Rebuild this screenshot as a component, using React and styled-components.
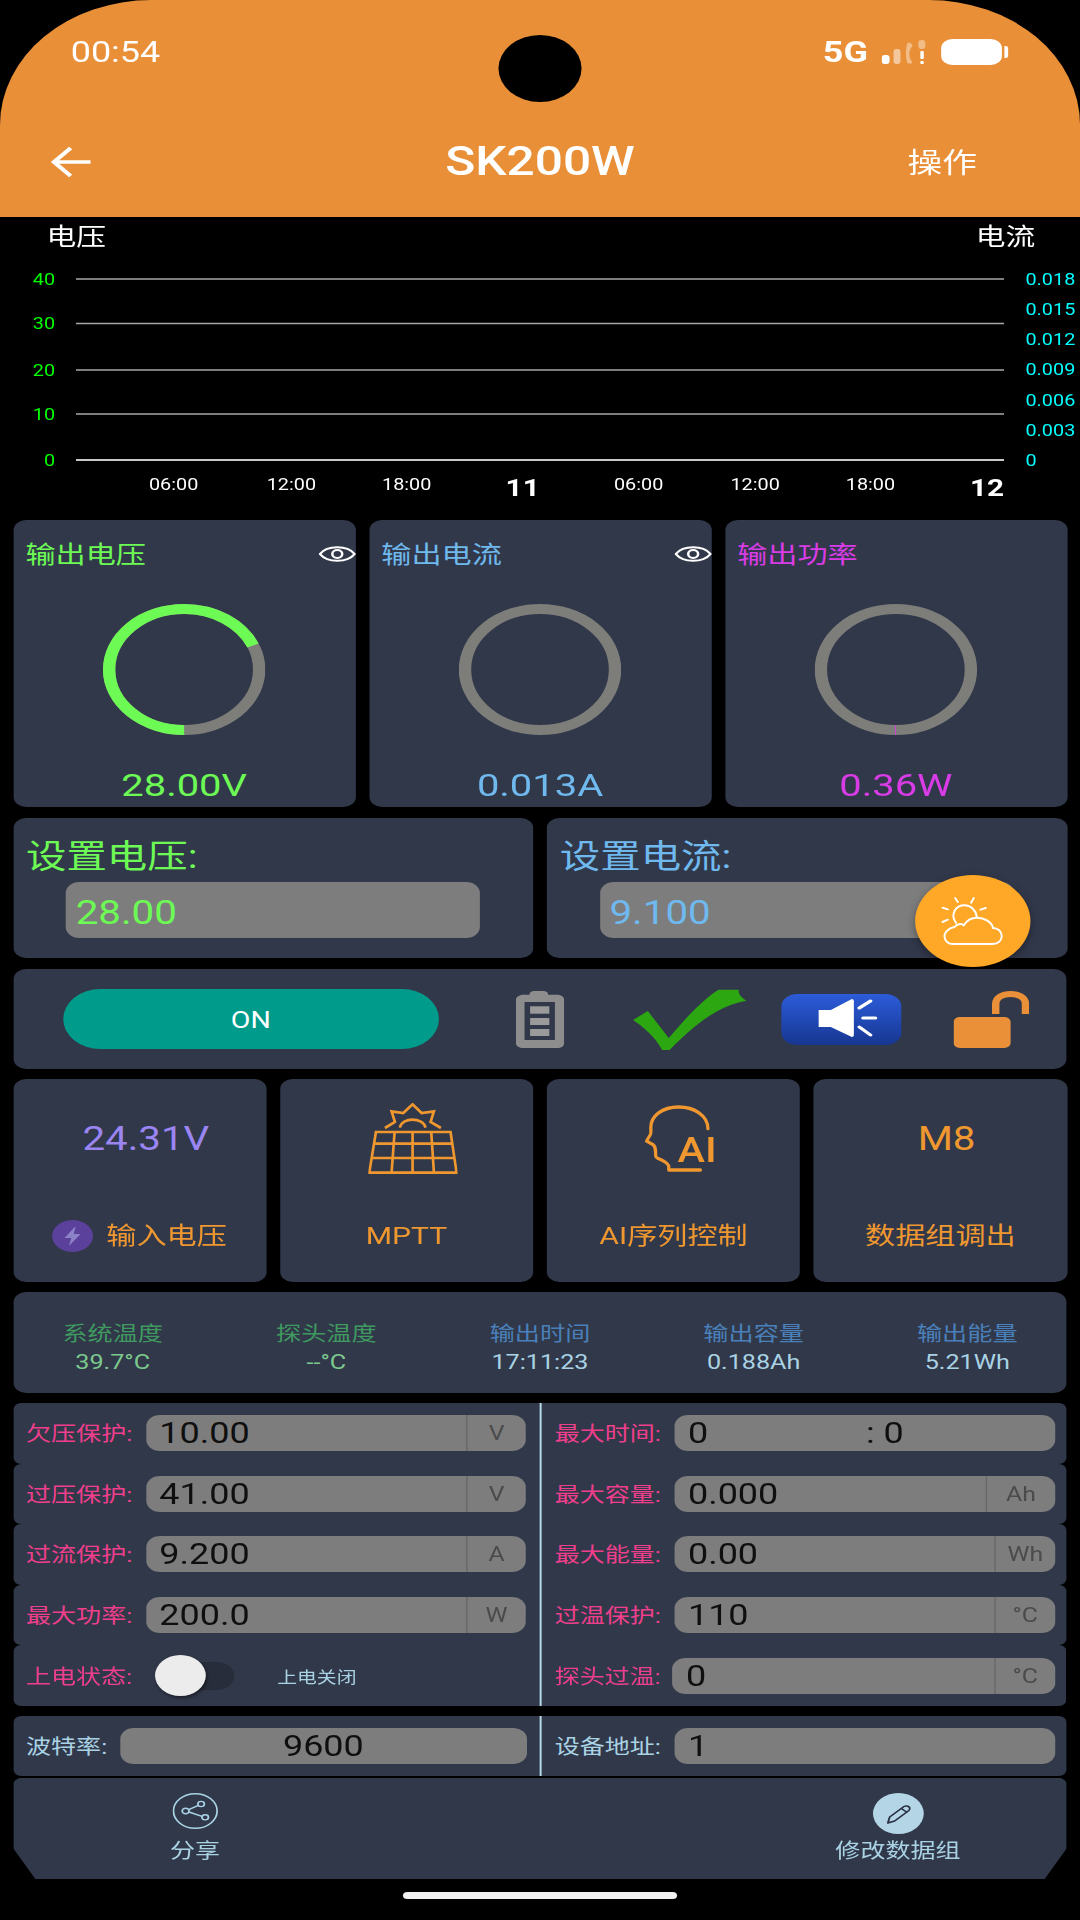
import React from 'react';
import styled, { createGlobalStyle } from 'styled-components';

const GlobalStyle = createGlobalStyle`
    html, body {
        margin: 0;
        background: #000;
        height: 1920px;
        overflow: hidden;
    }
    * { box-sizing: border-box; }
`

const CARD = '#31384a';
const INPUT = '#7d7d7d';
const ORANGE = '#f0982f';
const SKY = '#a9d3e4';

// the whole screen is wider than tall in the capture, so the page is laid out at 871 and stretched
const Screen = styled.div`
    width: 870.97px;
    height: 1920px;
    transform: scaleX(1.24);
    transform-origin: top left;
    font-family: Roboto, "Noto Sans CJK SC", sans-serif;
    color: #fff;
    position: relative;
`

//header
const Header = styled.header`
    height: 217px;
    background: #e98f38;
    border-radius: 122px 122px 0 0 / 125px 125px 0 0;
    padding-top: 37px;
    position: relative;
`
const Camera = styled.div`
    position: absolute;
    top: 35px;
    left: 50%;
    width: 67px;
    height: 67px;
    margin-left: -33.5px;
    border-radius: 50%;
    background: #000;
`
const StatusBar = styled.div`
    height: 30px;
    display: flex;
    align-items: center;
    padding: 0 58px 0 57px;
`
const Clock = styled.span`
    font-size: 29px;
    line-height: 30px;
    margin-right: auto;
`
const Network = styled.span`
    font-size: 29px;
    font-weight: 700;
    line-height: 30px;
    margin-right: 11px;
`
const BatteryBody = styled.div`
    width: 49px;
    height: 26px;
    margin-left: 12px;
    background: #fff;
    border-radius: 9px;
`
const BatteryNub = styled.div`
    width: 3px;
    height: 12px;
    margin-left: 2px;
    background: #fff;
    border-radius: 0 2px 2px 0;
`
const TitleBar = styled.div`
    margin-top: 64px;
    display: grid;
    grid-template-columns: 1fr auto 1fr;
    align-items: center;
    padding: 0 40px;
`
const Title = styled.h1`
    margin: 0;
    font-size: 40px;
    font-weight: 500;
    line-height: 50px;
`
const Action = styled.span`
    justify-self: end;
    margin-right: 43px;
    padding-top: 4px;
    font-size: 28px;
    line-height: 58px;
`

//chart
const ChartBox = styled.section`
    height: 303px;
`
const ChartHead = styled.div`
    height: 40px;
    padding: 8px 36px 0 37.5px;
    display: flex;
    justify-content: space-between;
    font-size: 24px;
    line-height: 24px;
`
const ChartSvg = styled.svg`
    display: block;
    font-family: Roboto, sans-serif;
`

//cards
const Stack = styled.main`
    padding: 0 10.5px;
    display: flex;
    flex-direction: column;
`
const Row = styled.div`
    display: grid;
    grid-template-columns: ${props => props.$cols};
    column-gap: 11px;
    margin-top: ${props => props.$top || 0}px;
`
const Card = styled.div`
    background: ${CARD};
    border-radius: 10px;
    position: relative;
`
const StatCard = styled(Card)`
    height: 287px;
    padding-top: 22px;
    display: flex;
    flex-direction: column;
    align-items: center;
`
const StatLabel = styled.div`
    align-self: flex-start;
    padding-left: 10px;
    font-size: 24.3px;
    line-height: 24px;
    padding-top: 1px;
    margin-bottom: -1px;
    color: ${props => props.$color};
`
const EyeBox = styled.svg`
    position: absolute;
    top: 23px;
    right: 0;
`
const RingSvg = styled.svg`
    display: block;
    margin-top: 37.5px;
`
const StatValue = styled.div`
    margin-top: 34.5px;
    font-size: 32.2px;
    line-height: 32px;
    color: ${props => props.$color};
`
const SetCard = styled(Card)`
    height: 140px;
    padding: 23px 0 0 10.5px;
`
const SetLabel = styled.div`
    font-size: 32.6px;
    line-height: 32px;
    color: ${props => props.$color};
`
const SetInput = styled.div`
    margin: 9px 0 0 32px;
    width: 334px;
    height: 56px;
    padding-left: 8px;
    background: ${INPUT};
    border-radius: 11px;
    font-size: 32.5px;
    line-height: 62px;
    color: ${props => props.$color};
`
const Fab = styled.button`
    position: absolute;
    top: 57px;
    right: 30px;
    width: 93px;
    height: 92px;
    padding: 0;
    border: 0;
    border-radius: 50%;
    background: #ffa726;
    box-shadow: 0 3px 8px rgba(0, 0, 0, .35);
    display: flex;
    align-items: center;
    justify-content: center;
`
const Tools = styled(Card)`
    height: 100px;
    margin-top: 11px;
    padding-left: 40.3px;
    display: flex;
    align-items: center;
`
const PowerPill = styled.div`
    width: 303px;
    height: 60px;
    border-radius: 30px;
    background: #009b8a;
    text-align: center;
    font-size: 23px;
    line-height: 64px;
`
const Tool = styled.svg`
    display: block;
    margin-left: ${props => props.$gap}px;
`
const FeatureCard = styled(Card)`
    height: 203px;
    display: grid;
    grid-template-rows: 118px 78px;
`
const FeatureTop = styled.div`
    padding: 2px 0 0 10px;
    display: flex;
    align-items: center;
    justify-content: center;
    font-size: 32.5px;
    line-height: 32px;
    color: ${props => props.$color || ORANGE};
`
const FeatureBottom = styled.div`
    display: flex;
    align-items: center;
    justify-content: center;
    gap: 10.5px;
    font-size: 24.3px;
    line-height: 24px;
    color: ${ORANGE};
`
const StatsCard = styled(Card)`
    height: 101px;
    margin-top: 10px;
`
const StatsGrid = styled.div`
    margin: 0 -5.75px;
    display: grid;
    grid-template-columns: repeat(5, 1fr);
`
const StatsItem = styled.div`
    padding-top: 32px;
    text-align: center;
`
const StatsLabel = styled.div`
    font-size: 20.3px;
    line-height: 20px;
    color: ${props => props.$color};
`
const StatsValue = styled.div`
    margin-top: 8px;
    font-size: 20.3px;
    line-height: 20px;
    color: ${props => props.$color};
`

//settings table
const Table = styled.div`
    display: grid;
    grid-template-columns: 426.3px 1fr;
    grid-auto-rows: ${props => props.$rowHeight}px;
    margin-top: ${props => props.$top}px;
`
const Cell = styled.div`
    background: ${CARD};
    display: flex;
    align-items: center;
    padding-left: 10.5px;
    border-right: ${props => props.$left ? `2.2px solid #b5dbe8` : '0'};
    border-radius: ${props => props.$left ? '6px 0 0 6px' : '0 6px 6px 0'};
`
const CellLabel = styled.div`
    flex: 0 0 ${props => props.$width || 96.5}px;
    font-size: 20.2px;
    line-height: 24px;
    padding-top: 2px;
    white-space: nowrap;
    color: ${props => props.$color || '#ef3f8c'};
`
const Field = styled.div`
    flex: 0 0 ${props => props.$width || 306.5}px;
    margin-left: ${props => props.$shift || 0}px;
    height: 36px;
    display: flex;
    background: ${INPUT};
    border-radius: 11px;
    overflow: hidden;
`
const FieldValue = styled.div`
    flex: 1;
    min-width: 0;
    padding-left: ${props => props.$center ? 0 : 11}px;
    margin-left: ${props => props.$pull || 0}px;
    font-size: 29px;
    line-height: 36px;
    color: #0f0f0f;
    text-align: ${props => props.$center ? 'center' : 'left'};
`
const FieldUnit = styled.div`
    flex: 0 0 ${props => props.$width || 48}px;
    border-left: 1px solid #666;
    text-align: center;
    font-size: 20px;
    line-height: 37px;
    color: #4b4b4b;
`
const ToggleTrack = styled.div`
    flex: 0 0 64.5px;
    margin-left: 7px;
    height: 28px;
    border-radius: 14px;
    background: #282d3b;
    position: relative;
`
const ToggleKnob = styled.div`
    position: absolute;
    top: -7px;
    left: 0;
    width: 41px;
    height: 41px;
    border-radius: 50%;
    background: #ececec;
    box-shadow: 1px 2px 3px rgba(0, 0, 0, .45);
`
const ToggleText = styled.div`
    margin-left: 34.5px;
    font-size: 16px;
    color: ${SKY};
`

//bottom
const BottomBar = styled.div`
    height: 101px;
    margin-top: 2px;
    background: ${CARD};
    padding: 15px 81.3px 0 91.8px;
    display: flex;
    justify-content: space-between;
    clip-path: polygon(0 5px, 2px 2px, 5px 0, calc(100% - 5px) 0, calc(100% - 2px) 2px, 100% 5px, 100% 70px, calc(100% - 18px) 100%, 18px 100%, 0 70px);
`
const BottomItem = styled.div`
    width: 110px;
    display: flex;
    flex-direction: column;
    align-items: center;
`
const IconSlot = styled.div`
    height: 41px;
    display: flex;
    align-items: flex-start;
`
const EditCircle = styled.div`
    width: 41px;
    height: 41px;
    border-radius: 50%;
    background: #b4d5e5;
`
const BottomLabel = styled.div`
    margin-top: 7px;
    font-size: 20.2px;
    line-height: 20px;
    white-space: nowrap;
    color: ${SKY};
`
const HomeBar = styled.div`
    width: 220.6px;
    height: 7px;
    margin: 13px auto 0;
    border-radius: 4px;
    background: #f2f2f2;
`
//////////////////////////////////////////////

const leftTicks = [[40, 22], [30, 66.5], [20, 113], [10, 157], [0, 203]];
const rightTicks = ['0.018', '0.015', '0.012', '0.009', '0.006', '0.003', '0'];
const hours = [[140, '06:00'], [235, '12:00'], [328, '18:00'], [421.5, '11', true], [515, '06:00'], [609, '12:00'], [702, '18:00'], [796, '12', true]];

const Chart = () => (
    <ChartSvg width="871" height="263" viewBox="0 0 871 263">
        {leftTicks.map(([label, y]) => (
            <g key={label}>
                <line x1="61.3" x2="809.7" y1={y} y2={y} stroke={label === 0 ? '#c8c8c8' : '#a8a8a8'} strokeWidth={label === 0 ? 2 : 1.5} />
                <text x="44.4" y={y} fill="#00ff00" fontSize="16" textAnchor="end" dominantBaseline="central">{label}</text>
            </g>
        ))}
        {rightTicks.map((label, i) => (
            <text key={label} x="827" y={22 + i * 30.2} fill="#00ffff" fontSize="16" dominantBaseline="central">{label}</text>
        ))}
        {hours.map(([x, label, bold], i) => (
            <text key={i} x={x} y={bold ? 231.5 : 227} fill="#fff" fontSize={bold ? 24 : 16} fontWeight={bold ? 700 : 400} textAnchor="middle" dominantBaseline="central">{label}</text>
        ))}
    </ChartSvg>
);

const Eye = () => (
    <EyeBox width="30" height="22" viewBox="0 0 30 22" fill="none" stroke="#fff" strokeWidth="2">
        <path d="M1 11 C7 2 23 2 29 11 C23 20 7 20 1 11 Z" />
        <circle cx="15" cy="11" r="4" />
    </EyeBox>
);

const Ring = ({ color, percent }) => {
    const r = 60.5;
    const len = 2 * Math.PI * r;
    return (
        <RingSvg width="131" height="131" viewBox="0 0 131 131" fill="none" strokeWidth="10">
            <circle cx="65.5" cy="65.5" r={r} stroke="#7d7d7a" />
            <circle cx="65.5" cy="65.5" r={r} stroke={color} strokeDasharray={`${len * percent} ${len}`} transform="rotate(90 65.5 65.5)" />
        </RingSvg>
    );
};

const stats = [
    { label: '输出电压', value: '28.00V', color: '#6dfa55', percent: 0.684, eye: true },
    { label: '输出电流', value: '0.013A', color: '#6fb9ee', percent: 0, eye: true },
    { label: '输出功率', value: '0.36W', color: '#d93ce6', percent: 0.002 },
];

const SignalIcon = () => (
    <svg width="36" height="25" viewBox="0 0 45 25" preserveAspectRatio="none" fill="#fff">
        <rect x="0" y="15" width="8" height="9" rx="3" />
        <rect x="12" y="9" width="7" height="15" rx="3" opacity=".5" />
        <path d="M26 3 C29 2 31 4 31 6 C27 10 27 18 31 22 C31 24 28 24 26 23 C24 18 24 8 26 3 Z" opacity=".4" />
        <rect x="37" y="0" width="7" height="9" rx="3" opacity=".4" />
        <rect x="39" y="11" width="3.5" height="8" rx="1" />
        <rect x="39" y="21" width="3.5" height="3" rx="1" />
    </svg>
);

const BackArrow = () => (
    <svg width="34" height="32" viewBox="0 0 34 32" fill="none" stroke="#fff" strokeWidth="3.6">
        <path d="M33 16 H4 M17 2 L3.5 16 L17 30" />
    </svg>
);

const CloudSun = () => (
    <svg width="51" height="50" viewBox="80 62 190 150" preserveAspectRatio="none" fill="none" stroke="#fff" strokeWidth="6" strokeLinecap="round">
        <path d="M115 206 H235 C252 206 262 195 262 182 C262 168 250 158 236 158 C232 140 210 127 188 127 C170 127 155 138 148 150 C140 144 128 145 120 155 C105 158 90 168 90 183 C90 197 102 206 115 206 Z" />
        <path d="M125 143 C105 115 125 90 150 90 C170 90 185 105 187 125" />
        <path d="M122 68 L130 80 M178 68 L170 82 M84 97 L100 102 M198 103 L214 98 M84 140 L100 133" />
    </svg>
);

const BatteryLevel = () => (
    <Tool $gap="62" width="39" height="57" viewBox="0 0 39 57">
        <path d="M11 3.7 C11 1 13 0 15 0 H22 C24 0 26 1 26 3.7 H33 C37 3.7 39 6 39 9 V52 C39 55 37 57 33 57 H6 C3 57 0 55 0 52 V9 C0 6 3 3.7 6 3.7 Z" fill="#8d8d8d" />
        <rect x="7" y="11" width="24.5" height="38" fill={CARD} />
        <rect x="11.5" y="15.3" width="15.5" height="7.4" fill="#9a9a9a" />
        <rect x="11.5" y="27" width="15.5" height="7" fill="#9a9a9a" />
        <rect x="11.5" y="38" width="15.5" height="7" fill="#9a9a9a" />
    </Tool>
);

const CheckMark = () => (
    <Tool $gap="55.5" width="92" height="61" viewBox="0 0 92 61">
        <path d="M0.6 31 L12.4 22 L29.3 49 C42 31 55 12 69.4 0.7 L85.8 0.7 C85 5 88 9 92 11.7 C68 17 50 36 30 61 L24 61 C19 49 10 39 0.6 31 Z" fill="#2ca611" />
    </Tool>
);

const Speaker = () => (
    <Tool $gap="27.5" width="97" height="51" viewBox="0 0 97 51">
        <defs>
            <linearGradient id="speakerFill" x1="0" x2="0" y1="0" y2="1">
                <stop offset="0" stopColor="#2c5cd9" />
                <stop offset="1" stopColor="#163691" />
            </linearGradient>
        </defs>
        <rect width="97" height="51" rx="13" fill="url(#speakerFill)" />
        <path d="M30.2 16 L40 16 L57 5 C58 5 58.6 6 58.6 7 V41 C58.6 42 58 43 57 43 L40 33 L30.2 33 Z" fill="#fff" />
        <path d="M63 14 L72 7 M66 24 L76 24 M63 33 L72 41" stroke="#fff" strokeWidth="3" strokeLinecap="round" />
    </Tool>
);

const OpenLock = () => (
    <Tool $gap="42" width="61" height="57" viewBox="0 0 61 57">
        <rect x="0" y="26" width="46" height="31" rx="5" fill="#e99038" />
        <path d="M34 23 V13 C34 6 40 3 46 3 C52 3 58 6 58 13 V23" fill="none" stroke="#e99038" strokeWidth="6" />
    </Tool>
);

const SolarPanel = () => (
    <svg width="72" height="71.3" viewBox="85 38 268 214" preserveAspectRatio="none" fill="none" stroke={ORANGE} strokeWidth="8">
        <path d="M108 125 H332 L350 247 H88 Z" />
        <path d="M102 160 H338 M96 203 H344 M164 125 L155 247 M218 125 V247 M274 125 L282 247" />
        <path d="M135 113 L165 95 L155 63 L190 68 L218 42 L245 68 L282 63 L272 95 L303 113" />
        <path d="M180 112 C185 80 250 80 257 112" />
    </svg>
);

const AiHead = () => (
    <svg width="60" height="68" viewBox="904 42 228 204" preserveAspectRatio="none" fill="none" stroke={ORANGE} strokeWidth="10" strokeLinecap="round" strokeLinejoin="round">
        <path d="M1105 113 C1105 75 1065 48 1015 48 C965 48 930 75 930 110 C930 120 932 125 928 132 L917 150 L935 160 C945 165 945 180 945 195 C945 205 975 205 985 225 L985 237 L1082 237" />
        <text x="1012" y="212" fill={ORANGE} stroke="none" fontSize="107" fontWeight="500" textLength="120" lengthAdjust="spacingAndGlyphs" fontFamily="Roboto, sans-serif">AI</text>
    </svg>
);

const BoltBadge = () => (
    <svg width="33" height="32" viewBox="0 0 33 32">
        <ellipse cx="16.5" cy="16" rx="16.5" ry="16" fill="#5b409c" />
        <path d="M19 6 L10 18 H15.5 L13.5 26 L23 14 H17.5 Z" fill="#8d82c8" />
    </svg>
);

const ShareIcon = () => (
    <svg width="37" height="36" viewBox="0 0 37 36" fill="none" stroke={SKY} strokeWidth="1.4">
        <ellipse cx="18.5" cy="18" rx="17.6" ry="17.2" />
        <circle cx="23.2" cy="11" r="2.6" />
        <circle cx="10.7" cy="18" r="2.8" />
        <circle cx="26.5" cy="24.3" r="2.6" />
        <path d="M21 12.4 L13.2 16.6 M13.4 19 L23.9 23.3" />
    </svg>
);

const PencilIcon = () => (
    <svg width="41" height="41" viewBox="0 0 41 41" fill="none" stroke="#2a3144" strokeWidth="1.5" strokeLinejoin="round">
        <path d="M12 30 L13.5 24 L25 13.5 C26.5 12.5 28.5 13 29.5 14.5 C30 16 29.5 17 29 17.5 L17.5 28 Z" />
        <path d="M23 15.5 L27.5 19.5" />
    </svg>
);

const leftRows = [
    { label: '欠压保护:', value: '10.00', unit: 'V' },
    { label: '过压保护:', value: '41.00', unit: 'V' },
    { label: '过流保护:', value: '9.200', unit: 'A' },
    { label: '最大功率:', value: '200.0', unit: 'W' },
];
const rightRows = [
    { label: '最大容量:', value: '0.000', unit: 'Ah', unitWidth: 56 },
    { label: '最大能量:', value: '0.00', unit: 'Wh', unitWidth: 49 },
    { label: '过温保护:', value: '110', unit: '°C', unitWidth: 49 },
];

const SettingField = ({ value, unit, unitWidth, ...rest }) => (
    <Field {...rest}>
        <FieldValue>{value}</FieldValue>
        {unit && <FieldUnit $width={unitWidth}>{unit}</FieldUnit>}
    </Field>
);

const App = () => {
    const tempStats = [
        { label: '系统温度', value: '39.7°C', labelColor: '#3f9a60', valueColor: '#7cc98d' },
        { label: '探头温度', value: '--°C', labelColor: '#3f9a60', valueColor: '#7cc98d' },
        { label: '输出时间', value: '17:11:23', labelColor: '#4a80ba', valueColor: SKY },
        { label: '输出容量', value: '0.188Ah', labelColor: '#4a80ba', valueColor: SKY },
        { label: '输出能量', value: '5.21Wh', labelColor: '#4a80ba', valueColor: SKY },
    ];

    return (
        <Screen>
            <GlobalStyle />
            <Header>
                <Camera />
                <StatusBar>
                    <Clock>00:54</Clock>
                    <Network>5G</Network>
                    <SignalIcon />
                    <BatteryBody />
                    <BatteryNub />
                </StatusBar>
                <TitleBar>
                    <BackArrow />
                    <Title>SK200W</Title>
                    <Action>操作</Action>
                </TitleBar>
            </Header>

            <ChartBox>
                <ChartHead>
                    <span>电压</span>
                    <span>电流</span>
                </ChartHead>
                <Chart />
            </ChartBox>

            <Stack>
                <Row $cols="repeat(3, 276px)">
                    {stats.map(s => (
                        <StatCard key={s.label}>
                            <StatLabel $color={s.color}>{s.label}</StatLabel>
                            {s.eye && <Eye />}
                            <Ring color={s.color} percent={s.percent} />
                            <StatValue $color={s.color}>{s.value}</StatValue>
                        </StatCard>
                    ))}
                </Row>

                <Row $cols="repeat(2, 419.5px)" $top="11">
                    <SetCard>
                        <SetLabel $color="#6dfa55">设置电压:</SetLabel>
                        <SetInput $color="#6dfa55">28.00</SetInput>
                    </SetCard>
                    <SetCard>
                        <SetLabel $color="#6fb9ee">设置电流:</SetLabel>
                        <SetInput $color="#6fb9ee">9.100</SetInput>
                        <Fab><CloudSun /></Fab>
                    </SetCard>
                </Row>

                <Tools>
                    <PowerPill>ON</PowerPill>
                    <BatteryLevel />
                    <CheckMark />
                    <Speaker />
                    <OpenLock />
                </Tools>

                <Row $cols="repeat(4, 204.25px)" $top="10">
                    <FeatureCard>
                        <FeatureTop $color="#9a85f2">24.31V</FeatureTop>
                        <FeatureBottom><BoltBadge />输入电压</FeatureBottom>
                    </FeatureCard>
                    <FeatureCard>
                        <FeatureTop><SolarPanel /></FeatureTop>
                        <FeatureBottom>MPTT</FeatureBottom>
                    </FeatureCard>
                    <FeatureCard>
                        <FeatureTop><AiHead /></FeatureTop>
                        <FeatureBottom>AI序列控制</FeatureBottom>
                    </FeatureCard>
                    <FeatureCard>
                        <FeatureTop>M8</FeatureTop>
                        <FeatureBottom>数据组调出</FeatureBottom>
                    </FeatureCard>
                </Row>

                <StatsCard>
                    <StatsGrid>
                        {tempStats.map(s => (
                            <StatsItem key={s.label}>
                                <StatsLabel $color={s.labelColor}>{s.label}</StatsLabel>
                                <StatsValue $color={s.valueColor}>{s.value}</StatsValue>
                            </StatsItem>
                        ))}
                    </StatsGrid>
                </StatsCard>

                <Table $rowHeight="60.6" $top="10">
                    <Cell $left>
                        <CellLabel>{leftRows[0].label}</CellLabel>
                        <SettingField value={leftRows[0].value} unit={leftRows[0].unit} />
                    </Cell>
                    <Cell>
                        <CellLabel>最大时间:</CellLabel>
                        <Field $width="307">
                            <FieldValue>0</FieldValue>
                            <FieldValue $pull="-20">:&nbsp;0</FieldValue>
                        </Field>
                    </Cell>
                    {leftRows.slice(1).map((row, i) => (
                        <React.Fragment key={row.label}>
                            <Cell $left>
                                <CellLabel>{row.label}</CellLabel>
                                <SettingField value={row.value} unit={row.unit} />
                            </Cell>
                            <Cell>
                                <CellLabel>{rightRows[i].label}</CellLabel>
                                <SettingField $width="307" value={rightRows[i].value} unit={rightRows[i].unit} unitWidth={rightRows[i].unitWidth} />
                            </Cell>
                        </React.Fragment>
                    ))}
                    <Cell $left>
                        <CellLabel>上电状态:</CellLabel>
                        <ToggleTrack><ToggleKnob /></ToggleTrack>
                        <ToggleText>上电关闭</ToggleText>
                    </Cell>
                    <Cell>
                        <CellLabel>探头过温:</CellLabel>
                        <SettingField $width="308.6" $shift="-1.6" value="0" unit="°C" unitWidth={49} />
                    </Cell>
                </Table>

                <Table $rowHeight="60" $top="10">
                    <Cell $left>
                        <CellLabel $width="75.8" $color={SKY}>波特率:</CellLabel>
                        <Field $width="328">
                            <FieldValue $center>9600</FieldValue>
                        </Field>
                    </Cell>
                    <Cell>
                        <CellLabel $color={SKY}>设备地址:</CellLabel>
                        <Field $width="307">
                            <FieldValue>1</FieldValue>
                        </Field>
                    </Cell>
                </Table>

                <BottomBar>
                    <BottomItem>
                        <IconSlot><ShareIcon /></IconSlot>
                        <BottomLabel>分享</BottomLabel>
                    </BottomItem>
                    <BottomItem>
                        <IconSlot>
                            <EditCircle><PencilIcon /></EditCircle>
                        </IconSlot>
                        <BottomLabel>修改数据组</BottomLabel>
                    </BottomItem>
                </BottomBar>
            </Stack>
            <HomeBar />
        </Screen>
    );
};

export default App;
